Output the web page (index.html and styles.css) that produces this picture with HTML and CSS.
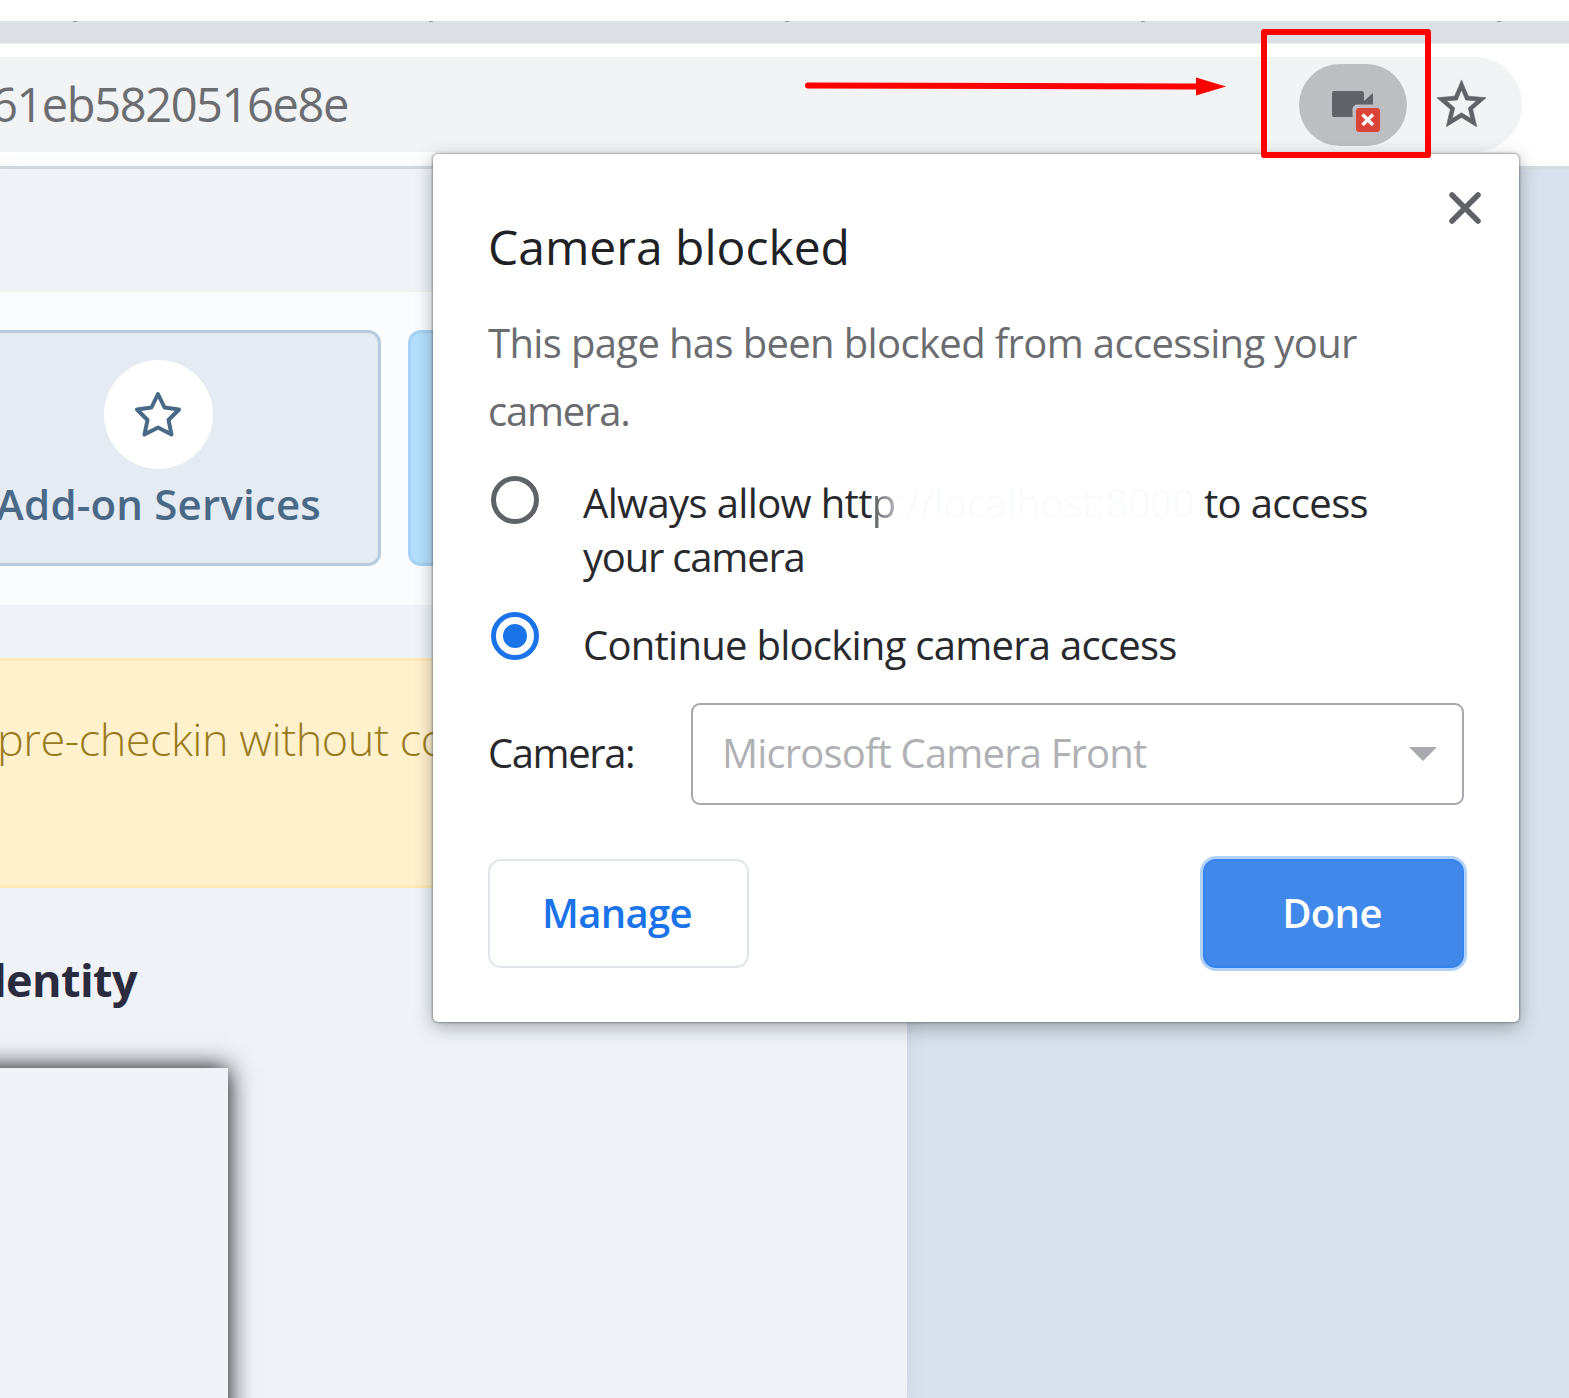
FILE: index.html
```html
<!DOCTYPE html>
<html lang="en">
<head>
<meta charset="utf-8">
<title>Camera blocked</title>
<link rel="stylesheet" href="styles.css">
</head>
<body>
<div class="screen">
  <div class="tabstrip"><i></i><i></i><i></i><i></i><i></i></div>
  <header class="toolbar">
    <div class="omnibox">
      <div class="url"><span>61eb5820516e8e</span></div>
      <div class="omnibox-icons">
        <div class="camera-chip">
          <svg width="50" height="44" viewBox="0 0 50 44">
            <path d="M3 2h27q3 0 3 3v7l9-8v24H3q-2 0-2-2V4q0-2 2-2z" fill="#5f6368"/>
            <rect x="21.500" y="15.500" width="30" height="30" rx="5" fill="#bdbec1"/>
            <rect x="25" y="19" width="24" height="24" rx="3" fill="#db4437"/>
            <path d="M31.500 25.500l10.500 10.500m0-10.500l-10.500 10.500" stroke="#fff" stroke-width="3.400"/>
          </svg>
        </div>
        <svg class="bookmark" width="59" height="59" viewBox="0 0 24 24"><path fill="#5f6368" stroke="#5f6368" stroke-width=".25" d="M22 9.240l-7.190-.62L12 2 9.190 8.630 2 9.240l5.460 4.730L5.820 21 12 17.270 18.180 21l-1.630-7.030L22 9.240zM12 15.400l-3.760 2.270 1-4.280-3.320-2.880 4.380-.38L12 6.100l1.710 4.040 4.380.38-3.320 2.880 1 4.280L12 15.400z"/></svg>
      </div>
    </div>
  </header>
  <main class="page">
    <div class="content">
      <section class="steps">
        <div class="step">
          <div class="step-icon">
            <svg width="50" height="48" viewBox="0 0 50 48"><path d="M25 4l6.500 13.500L46 19.500 35.500 30l3 14.500L25 37.500l-13.500 7 3-14.500L4 19.500l14.500-2z" fill="none" stroke="#4a6987" stroke-width="4" stroke-linejoin="round"/></svg>
          </div>
          <div class="step-label">Add-on Services</div>
        </div>
        <div class="step current"></div>
      </section>
      <div class="alert"><span>pre-checkin without co</span></div>
      <h2 class="heading"><span>Identity</span></h2>
      <div class="preview"></div>
    </div>
  </main>

  <div class="dialog">
    <svg class="close" width="36" height="36" viewBox="0 0 36 36"><path d="M5 5l26 26M31 5L5 31" stroke="#5f6368" stroke-width="5.500" stroke-linecap="round"/></svg>
    <h1 class="title">Camera blocked</h1>
    <p class="message">This page has been blocked from accessing your<br><span class="tight">camera.</span></p>
    <div class="option">
      <span class="radio"></span>
      <span class="option-text">Always allow htt<span class="fade">p</span><span class="host">://localhost:8000</span> to access<br><span class="tight">your camera</span></span>
    </div>
    <div class="option second">
      <span class="radio checked"></span>
      <span class="option-text">Continue blocking camera access</span>
    </div>
    <div class="device">
      <span class="device-label">Camera:</span>
      <div class="select"><span>Microsoft Camera Front</span>
        <svg width="28" height="14" viewBox="0 0 28 14"><path d="M0 0h28L14 14z" fill="#a8aaad"/></svg>
      </div>
    </div>
    <div class="actions">
      <div class="button manage">Manage</div>
      <div class="button done">Done</div>
    </div>
  </div>

  <div class="highlight"></div>
  <svg class="arrow" width="430" height="24" viewBox="0 0 430 24"><path d="M8 10.500L397 11.500" stroke="#f00" stroke-width="6" stroke-linecap="round"/><path d="M396 2.500l30 9-30 9z" fill="#f00"/></svg>
</div>
</body>
</html>
```
FILE: styles.css
```css
* { box-sizing: border-box; }
body { margin: 0; background: #fff; font-family: "Open Sans", "Noto Sans", sans-serif; }
h1, h2, p { margin: 0; font-weight: 400; }
svg { display: block; flex: none; }

.screen { position: relative; width: 1569px; height: 1398px; overflow: hidden; display: flex; flex-direction: column; padding-top: 21px; }

.tabstrip { flex: none; height: 23px; background: #dde1e6; border-bottom: 1px solid #eceef1; display: flex; gap: 352px; padding-left: 73px; }
.tabstrip i { flex: none; width: 4px; height: 1px; background: #9a9da2; }

.toolbar { flex: none; height: 125px; padding-top: 13px; border-bottom: 3px solid #d8dce0; }
.omnibox { width: 1522px; height: 95px; background: #f1f3f4; border-radius: 0 48px 48px 0; display: flex; align-items: center; justify-content: space-between; }
.url { width: 348px; display: flex; justify-content: flex-end; font-size: 47px; line-height: 64px; letter-spacing: -1.4px; color: #6b6d71; margin-top: -1px; }
.omnibox-icons { display: flex; align-items: center; padding-right: 31px; gap: 25px; }
.camera-chip { width: 108px; height: 82px; border-radius: 41px; background: #bdbec1; padding: 25px 0 0 32px; }

.page { flex: 1; min-height: 0; background: #d8e0eb; }
.content { width: 907px; height: 100%; background: #eff3f8; padding-top: 121px; box-shadow: 0 0 18px rgba(100, 130, 170, .12); }
.steps { height: 315px; background: #fafcfe; border-top: 2px solid #f2f2f0; padding-top: 38px; display: flex; gap: 27px; }
.step { flex: none; width: 445px; height: 236px; margin-left: -64px; border: 3px solid #b9cbde; border-radius: 13px; background: #e4ebf3; display: flex; flex-direction: column; align-items: center; padding-top: 27px; }
.step.current { margin-left: 0; background: #b5dffe; border-color: #a5d2f5; }
.step-icon { width: 109px; height: 109px; border-radius: 50%; background: #fff; display: flex; align-items: center; justify-content: center; padding: 0 1px 1px 0; }
.step-label { font-size: 42px; line-height: 56px; font-weight: 600; letter-spacing: .2px; color: #4a6987; margin-top: 7px; white-space: nowrap; }
.alert { margin-top: 53px; height: 230px; background: #fff1cc; border: 3px solid #ffe9b5; border-width: 3px 0; padding-top: 46px; font-size: 45px; line-height: 64px; font-weight: 300; letter-spacing: -.45px; color: #997a1e; white-space: nowrap; }
.alert span { margin-left: -3px; }
.heading { width: 137px; display: flex; justify-content: flex-end; margin-top: 60px; font-size: 45px; line-height: 64px; font-weight: 700; letter-spacing: -.6px; color: #2b2b40; }
.preview { width: 268px; height: 400px; margin: 56px 0 0 -40px; background: #eff3f8; box-shadow: 0 0 24px #000; }

.dialog { position: absolute; left: 433px; top: 154px; width: 1086px; height: 868px; padding: 61px 55px 0; background: #fff; border-radius: 5px; box-shadow: 0 0 2px 1px rgba(60, 64, 67, .42), 0 5px 18px rgba(60, 64, 67, .42); font-size: 40px; letter-spacing: -.64px; color: #28292d; display: flex; flex-direction: column; }
.close { position: absolute; right: 36px; top: 36px; }
.title { font-size: 48px; line-height: 64px; letter-spacing: 0; color: #202124; }
.message { margin-top: 30px; line-height: 68px; color: #6a6c70; white-space: nowrap; }
.tight { letter-spacing: -1.2px; }
.option { display: flex; align-items: flex-start; margin-top: 31px; padding-left: 3px; gap: 44px; line-height: 54px; white-space: nowrap; }
.option.second { margin-top: 34px; letter-spacing: -.74px; }
.radio { flex: none; width: 48px; height: 48px; border-radius: 50%; border: 5px solid #5f6368; display: flex; align-items: center; justify-content: center; }
.checked { border-color: #1a73e8; margin-top: -6px; }
.checked::after { content: ""; width: 24px; height: 24px; border-radius: 50%; background: #1a73e8; }
.fade { background: linear-gradient(90deg, #55575b, #b9bbbe); background-clip: text; -webkit-background-clip: text; color: transparent; }
.host { color: #fafbfb; }
.device { display: flex; align-items: center; justify-content: space-between; margin-top: 31px; }
.device-label { margin-top: -4px; letter-spacing: -1.4px; }
.select { width: 773px; height: 102px; border: 2px solid #a6a8ab; border-radius: 9px; padding: 0 25px 0 29px; display: flex; align-items: center; justify-content: space-between; color: #b0b1b4; letter-spacing: -.83px; }
.select span { margin-top: -4px; }
.actions { display: flex; justify-content: space-between; margin-top: 54px; }
.button { width: 261px; height: 109px; border-radius: 13px; display: flex; align-items: center; justify-content: center; font-weight: 600; padding: 0 3px 3px 0; }
.manage { border: 2px solid #e2e5e8; color: #1a73e8; }
.done { background: #4089ea; color: #fff; border: 2px solid #3583ec; box-shadow: 0 0 0 3px #b3d2f8; }

.highlight { position: absolute; left: 1261px; top: 29px; width: 170px; height: 129px; border: 6px solid #f00; border-radius: 3px; }
.arrow { position: absolute; left: 800px; top: 75px; }
```
